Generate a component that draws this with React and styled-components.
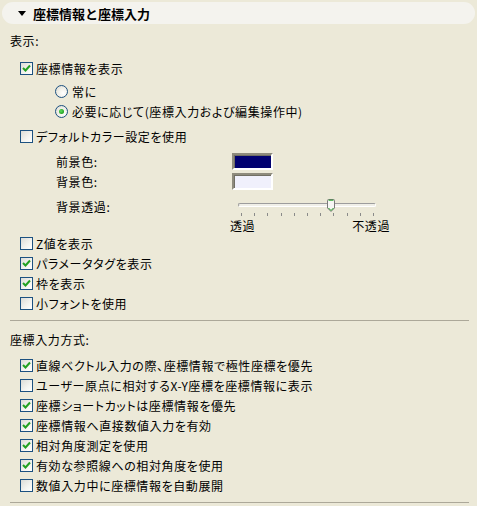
import React from "react";
import styled, { createGlobalStyle } from "styled-components";

const GlobalStyle = createGlobalStyle`
  body {
    margin: 0;
    background: #ece9d8;
    font-family: "Noto Sans CJK JP", "Noto Sans", sans-serif;
    font-size: 12px;
    color: #000;
  }
`;

const Panel = styled.div`
  width: 477px;
  height: 506px;
  overflow: hidden;
  background: #ece9d8;
  padding-top: 2px;
  box-sizing: border-box;
  font-size: 12px;
`;

const Header = styled.div`
  margin: 0 2px;
  height: 22px;
  border-radius: 11px;
  background: #f4f3ee;
  display: flex;
  align-items: center;
  padding-left: 16px;
  font-weight: bold;
  font-size: 13px;
`;

const Triangle = styled.span`
  width: 0;
  height: 0;
  border-left: 4px solid transparent;
  border-right: 4px solid transparent;
  border-top: 5px solid #000;
  margin-right: 7px;
`;

const Body = styled.div`
  padding: 0 8px 0 10px;
  display: flex;
  flex-direction: column;
  font-feature-settings: "palt";
  letter-spacing: 0.6px;
`;

const Row = styled.div`
  height: ${(p) => p.$h || 20}px;
  display: flex;
  align-items: center;
  padding-left: ${(p) => p.$indent || 0}px;
  margin-top: ${(p) => p.$mt || 0}px;
  font-size: 12px;
  white-space: nowrap;
`;

const Box = styled.span`
  width: 11px;
  height: 11px;
  border: 1px solid #1c5180;
  background: linear-gradient(135deg, #dcdcd7 0%, #f4f4f0 60%, #fff 100%);
  display: inline-flex;
  align-items: center;
  justify-content: center;
  margin-right: 3px;
  flex: none;
`;

const Radio = styled.span`
  width: 11px;
  height: 11px;
  border: 1px solid #1c5180;
  border-radius: 50%;
  background: radial-gradient(circle at 65% 65%, #fff 0%, #f0efe8 50%, #d6d5cc 100%);
  display: inline-flex;
  align-items: center;
  justify-content: center;
  margin-right: 4px;
  flex: none;
`;

const Dot = styled.span`
  width: 5px;
  height: 5px;
  border-radius: 50%;
  background: radial-gradient(circle at 40% 40%, #5fdc5f 0%, #21a121 70%);
`;

const ColorLabel = styled.span`
  width: 176px;
  flex: none;
`;

const Swatch = styled.span`
  width: 37px;
  height: 13px;
  background: ${(p) => p.$color};
  border: 2px solid;
  border-color: #8e8b7d #fff #fff #8e8b7d;
  box-shadow: inset 1px 1px 0 #716f64;
`;

const SliderBlock = styled.div`
  display: flex;
  padding-left: 46px;
  margin-top: 5px;
  height: 37px;
  font-size: 12px;
`;

const SliderLabel = styled.div`
  width: 174px;
  height: 20px;
  display: flex;
  align-items: center;
`;

const SliderCol = styled.div`
  width: 160px;
  display: flex;
  flex-direction: column;
`;

const Track = styled.div`
  position: relative;
  height: 20px;
`;

const TrackLine = styled.div`
  position: absolute;
  left: 8px;
  top: 7px;
  width: 136px;
  height: 2px;
  border-top: 1px solid #9d9d9d;
  border-left: 1px solid #9d9d9d;
  border-bottom: 1px solid #fff;
  border-right: 1px solid #fff;
  border-radius: 2px;
  background: #f0efe8;
`;

const Thumb = styled.svg`
  position: absolute;
  left: 97px;
  top: 3px;
`;

const Ticks = styled.div`
  position: absolute;
  left: 11px;
  top: 17px;
  width: 133px;
  display: flex;
  justify-content: space-between;
`;

const Tick = styled.span`
  width: 1px;
  height: 3px;
  background: #8a8a8a;
`;

const Ends = styled.div`
  display: flex;
  justify-content: space-between;
  margin-top: 2px;
  height: 15px;
  align-items: center;
`;

const Separator = styled.div`
  height: 1px;
  background: #aca899;
  margin: ${(p) => p.$mt || 0}px 0 0 0;
  width: 459px;
`;

const Check = () => (
  <svg width="9" height="9" viewBox="0 0 9 9">
    <path d="M1 4 L3.5 6.5 L8 1.5" fill="none" stroke="#21a121" strokeWidth="2" />
  </svg>
);

const CheckRow = ({ checked, children, mt }) => (
  <Row $indent={10} $mt={mt}>
    <Box>{checked && <Check />}</Box>
    {children}
  </Row>
);

const RadioRow = ({ selected, children, mt }) => (
  <Row $indent={45} $mt={mt}>
    <Radio>{selected && <Dot />}</Radio>
    {children}
  </Row>
);

const ColorRow = ({ label, color }) => (
  <Row $indent={46}>
    <ColorLabel>{label}</ColorLabel>
    <Swatch $color={color} />
  </Row>
);

const displayOpts = [
  { label: "Z値を表示", checked: false },
  { label: "パラメータタグを表示", checked: true },
  { label: "枠を表示", checked: true },
  { label: "小フォントを使用", checked: false },
];

const inputOpts = [
  { label: "直線ベクトル入力の際、座標情報で極性座標を優先", checked: true },
  { label: "ユーザー原点に相対するX-Y座標を座標情報に表示", checked: false },
  { label: "座標ショートカットは座標情報を優先", checked: true },
  { label: "座標情報へ直接数値入力を有効", checked: true },
  { label: "相対角度測定を使用", checked: true },
  { label: "有効な参照線への相対角度を使用", checked: true },
  { label: "数値入力中に座標情報を自動展開", checked: false },
];

export default function App() {
  return (
    <Panel>
      <GlobalStyle />
      <Header>
        <Triangle />
        座標情報と座標入力
      </Header>
      <Body>
        <Row $mt={6}>表示:</Row>
        <CheckRow checked mt={8}>座標情報を表示</CheckRow>
        <RadioRow mt={3}>常に</RadioRow>
        <RadioRow selected>必要に応じて(座標入力および編集操作中)</RadioRow>
        <CheckRow mt={5}>デフォルトカラー設定を使用</CheckRow>
        <Row $h={5} />
        <ColorRow label="前景色:" color="#000070" />
        <ColorRow label="背景色:" color="#f0f0fc" />
        <SliderBlock>
          <SliderLabel>背景透過:</SliderLabel>
          <SliderCol>
            <Track>
              <TrackLine />
              <Ticks>
                {Array.from({ length: 11 }).map((_, i) => (
                  <Tick key={i} />
                ))}
              </Ticks>
              <Thumb width="8" height="13" viewBox="0 0 8 13">
                <path d="M0.5 1.5 Q0.5 0.5 1.5 0.5 L6.5 0.5 Q7.5 0.5 7.5 1.5 L7.5 9 L4 12.5 L0.5 9 Z" fill="#f7f7f4" stroke="#7a7a7a" />
                <path d="M1.5 9 L4 11.5 L6.5 9" fill="none" stroke="#21a121" />
                <path d="M1.5 1.2 L6.5 1.2" stroke="#21a121" />
              </Thumb>
            </Track>
            <Ends>
              <span>透過</span>
              <span>不透過</span>
            </Ends>
          </SliderCol>
        </SliderBlock>
        {displayOpts.map((o) => (
          <CheckRow key={o.label} checked={o.checked}>
            {o.label}
          </CheckRow>
        ))}
        <Separator $mt={7} />
        <Row $mt={8}>座標入力方式:</Row>
        <Row $h={6} />
        {inputOpts.map((o) => (
          <CheckRow key={o.label} checked={o.checked}>
            {o.label}
          </CheckRow>
        ))}
        <Separator $mt={7} />
      </Body>
    </Panel>
  );
}
